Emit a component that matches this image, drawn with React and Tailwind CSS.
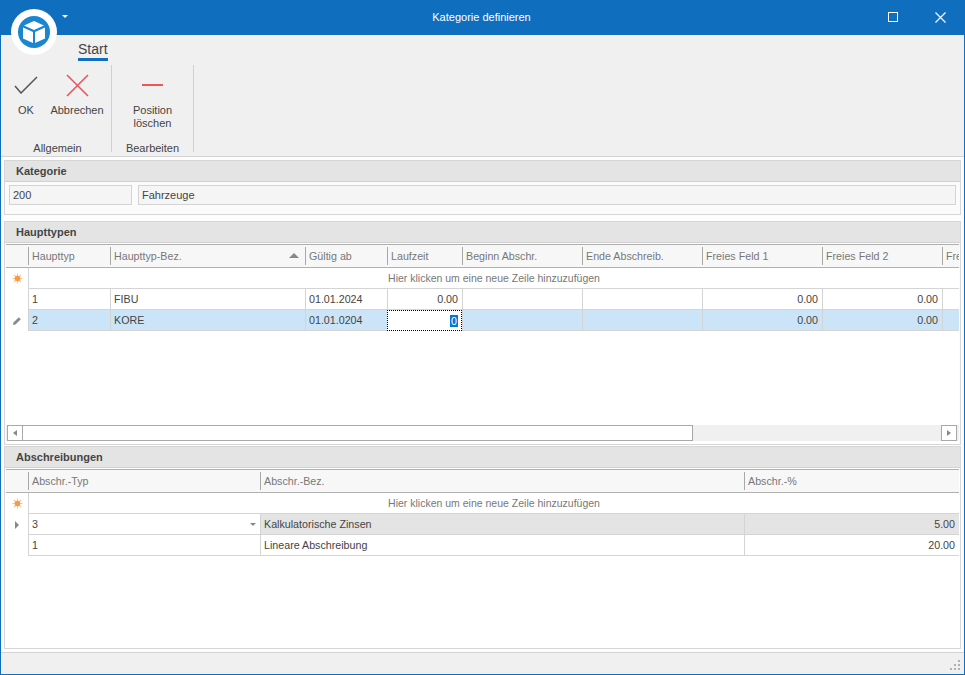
const FONT = "font-['Liberation_Sans',Arial,sans-serif]";

const MAIN_COLS = 'grid-cols-[22px_82px_195px_82px_75px_120px_120px_120px_120px_17px]';
const SUB_COLS = 'grid-cols-[22px_232px_484px_215px]';

const Cube = () => (
  <svg width="32" height="32" viewBox="0 0 32 32">
    <circle cx="16" cy="16" r="16" fill="#1a86d0" />
    <path d="M16 5 L26 9.5 L16 14 L6 9.5 Z" fill="#fff" />
    <path d="M5 11.5 L15 16 V27 L5 22.5 Z" fill="#fff" />
    <path d="M27 11.5 L17 16 V27 L27 22.5 Z" fill="#fff" />
  </svg>
);

const RibbonButton = ({ icon, label, className }) => (
  <div className={`flex flex-col items-center ${className}`}>
    <div className="h-[36px] flex items-center justify-center mt-[2px]">{icon}</div>
    <div className="text-[11px] leading-[13px] text-[#444] text-center mt-px">{label}</div>
  </div>
);

const PanelHeader = ({ title }) => (
  <div className="h-[21px] bg-[#e4e4e4] border-b border-[#d2d2d2] pl-[11px] flex items-center text-[11px] font-bold text-[#444]">
    {title}
  </div>
);

const HeadCell = ({ children, sort }) => (
  <div className="relative flex items-center pl-[4px] text-[10.7px] text-[#777] overflow-hidden whitespace-nowrap">
    <span className="absolute left-0 top-[2px] bottom-[2px] w-px bg-[#a8a8a8]" />
    {children}
    {sort && <span className="absolute right-[6px] top-[8px] w-0 h-0 border-x-[5px] border-x-transparent border-b-[5px] border-b-[#888]" />}
  </div>
);

const Cell = ({ children, right, className = '' }) => (
  <div className={`h-[21px] border-l border-b border-[#d4d4d4] flex items-center text-[10.7px] text-[#444] whitespace-nowrap overflow-hidden ${right ? 'justify-end pr-[4px]' : 'pl-[3px]'} ${className}`}>
    {children}
  </div>
);

const Star = () => (
  <svg width="11" height="11" viewBox="0 0 11 11">
    <g stroke="#f9c38d" strokeWidth="1.1">
      <path d="M5.5 0.5V10.5M0.5 5.5H10.5M2 2L9 9M9 2L2 9" />
    </g>
    <circle cx="5.5" cy="5.5" r="2.8" fill="#f79a45" />
  </svg>
);

const Pencil = () => (
  <svg width="10" height="10" viewBox="0 0 10 10">
    <path d="M1 9 L1.5 6.5 L6.8 1.2 L8.8 3.2 L3.5 8.5 Z" fill="#8a8a8a" />
  </svg>
);

const NewRow = ({ cols }) => (
  <div className={`grid ${cols}`}>
    <div className="h-[21px] border-b border-transparent flex items-center justify-center"><Star /></div>
    <div className="col-span-full col-start-2 h-[21px] pt-[2px] bg-white border-b border-l border-[#d4d4d4] flex items-center justify-center text-[10.5px] text-[#777]">
      Hier klicken um eine neue Zeile hinzuzufügen
    </div>
  </div>
);

const Haupttypen = () => (
  <div className="h-[224px] border border-[#d6d6d6] bg-[#fbfbfb] flex flex-col">
    <PanelHeader title="Haupttypen" />
    <div className="mx-px flex-1 flex flex-col bg-white border-t border-[#b0b0b0] mt-px overflow-hidden">
      <div className={`grid ${MAIN_COLS} h-[23px] bg-[#f7f7f7] border-b border-[#b0b0b0]`}>
        <div />
        <HeadCell>Haupttyp</HeadCell>
        <HeadCell sort>Haupttyp-Bez.</HeadCell>
        <HeadCell>Gültig ab</HeadCell>
        <HeadCell>Laufzeit</HeadCell>
        <HeadCell>Beginn Abschr.</HeadCell>
        <HeadCell>Ende Abschreib.</HeadCell>
        <HeadCell>Freies Feld 1</HeadCell>
        <HeadCell>Freies Feld 2</HeadCell>
        <HeadCell>Fre</HeadCell>
      </div>
      <NewRow cols={MAIN_COLS} />
      <div className={`grid ${MAIN_COLS}`}>
        <div className="h-[21px]" />
        <Cell>1</Cell>
        <Cell>FIBU</Cell>
        <Cell>01.01.2024</Cell>
        <Cell right>0.00</Cell>
        <Cell />
        <Cell />
        <Cell right>0.00</Cell>
        <Cell right>0.00</Cell>
        <Cell />
      </div>
      <div className={`grid ${MAIN_COLS}`}>
        <div className="h-[21px] flex items-center justify-center"><Pencil /></div>
        <Cell className="bg-[#cce4f7]">2</Cell>
        <Cell className="bg-[#cce4f7]">KORE</Cell>
        <Cell className="bg-[#cce4f7]">01.01.0204</Cell>
        <div className="h-[21px] bg-white border border-dotted border-black flex items-center justify-end pr-[3px]">
          <span className="bg-[#0078d7] text-white text-[10.7px] leading-[12px] px-px">0</span>
        </div>
        <Cell className="bg-[#cce4f7]" />
        <Cell className="bg-[#cce4f7]" />
        <Cell right className="bg-[#cce4f7]">0.00</Cell>
        <Cell right className="bg-[#cce4f7]">0.00</Cell>
        <Cell className="bg-[#cce4f7]" />
      </div>
      <div className="flex-1" />
      <div className="h-[16px] mb-[3px] flex items-stretch bg-[#f0f0f0] pl-px pr-[2px]">
        <div className="w-[16px] bg-white border border-[#a8a8a8] flex items-center justify-center">
          <span className="w-0 h-0 border-y-[3px] border-y-transparent border-r-[4px] border-r-[#888]" />
        </div>
        <div className="w-[670px] bg-white border border-l-0 border-[#a8a8a8]" />
        <div className="flex-1" />
        <div className="w-[16px] bg-white border border-[#a8a8a8] flex items-center justify-center">
          <span className="w-0 h-0 border-y-[3px] border-y-transparent border-l-[4px] border-l-[#888]" />
        </div>
      </div>
    </div>
  </div>
);

const Abschreibungen = () => (
  <div className="h-[203px] border border-[#d6d6d6] bg-white flex flex-col">
    <PanelHeader title="Abschreibungen" />
    <div className="mx-px flex-1 flex flex-col bg-white border-t border-[#b0b0b0] mt-px overflow-hidden">
      <div className={`grid ${SUB_COLS} h-[23px] bg-[#f7f7f7] border-b border-[#b0b0b0]`}>
        <div />
        <HeadCell>Abschr.-Typ</HeadCell>
        <HeadCell>Abschr.-Bez.</HeadCell>
        <HeadCell>Abschr.-%</HeadCell>
      </div>
      <NewRow cols={SUB_COLS} />
      <div className={`grid ${SUB_COLS}`}>
        <div className="h-[21px] flex items-center justify-center">
          <span className="w-0 h-0 border-y-[4px] border-y-transparent border-l-[4px] border-l-[#888]" />
        </div>
        <Cell className="relative">
          3
          <span className="absolute right-[4px] top-[9px] w-0 h-0 border-x-[3px] border-x-transparent border-t-[3px] border-t-[#888]" />
        </Cell>
        <Cell className="bg-[#e4e4e4]">Kalkulatorische Zinsen</Cell>
        <Cell right className="bg-[#e4e4e4]">5.00</Cell>
      </div>
      <div className={`grid ${SUB_COLS}`}>
        <div className="h-[21px]" />
        <Cell>1</Cell>
        <Cell>Lineare Abschreibung</Cell>
        <Cell right>20.00</Cell>
      </div>
    </div>
  </div>
);

export default function App() {
  return (
    <div className={`relative w-[965px] h-[675px] flex flex-col bg-white border-x border-b border-[#106ebe] overflow-hidden ${FONT}`}>
      {/* title bar */}
      <div className="h-[35px] -mx-px bg-[#106ebe] flex items-center relative shrink-0">
        <span className="absolute left-[62px] top-[15px] w-0 h-0 border-x-[3px] border-x-transparent border-t-[3px] border-t-white" />
        <div className="flex-1 text-center text-white text-[11px] pr-[2px]">Kategorie definieren</div>
        <div className="absolute right-[67px] top-[12px] w-[10px] h-[10px] border border-white" />
        <svg className="absolute right-[19px] top-[12px]" width="11" height="11" viewBox="0 0 11 11">
          <path d="M0.5 0.5L10.5 10.5M10.5 0.5L0.5 10.5" stroke="#fff" strokeWidth="1.2" />
        </svg>
      </div>

      {/* logo lies over the title bar */}
      <div className="absolute left-[10px] top-[9px] w-[46px] h-[46px] rounded-full bg-white flex items-center justify-center">
        <Cube />
      </div>

      {/* ribbon */}
      <div className="h-[122px] shrink-0 bg-[#f0f0f0] border-b border-[#d4d4d4]">
        <div className="h-[30px] pl-[77px] pt-[5px] flex items-start">
          <div className="text-[14px] leading-[18px] text-[#444] border-b-[3px] border-[#106ebe]">Start</div>
        </div>
        <div className="flex h-[87px] pl-[3px]">
          <div className="w-[108px] border-r border-[#d0d0d0] flex flex-col">
            <div className="flex flex-1">
              <RibbonButton
                className="w-[44px]"
                label="OK"
                icon={
                  <svg width="24" height="18" viewBox="0 0 24 18">
                    <path d="M1 10 L7 17 L23 1" fill="none" stroke="#555" strokeWidth="1.5" />
                  </svg>
                }
              />
              <RibbonButton
                className="w-[58px]"
                label="Abbrechen"
                icon={
                  <svg width="23" height="23" viewBox="0 0 23 23">
                    <path d="M1 1L22 22M22 1L1 22" fill="none" stroke="#f0525a" strokeWidth="1.6" />
                  </svg>
                }
              />
            </div>
            <div className="h-[11px] mb-px text-center text-[11px] text-[#444] leading-[17px]">Allgemein</div>
          </div>
          <div className="w-[82px] border-r border-[#d0d0d0] flex flex-col">
            <div className="flex flex-1 justify-center">
              <RibbonButton
                className="w-[60px]"
                label={<>Position<br />löschen</>}
                icon={<div className="w-[21px] h-[2px] bg-[#ee5555]" />}
              />
            </div>
            <div className="h-[11px] mb-px text-center text-[11px] text-[#444] leading-[17px]">Bearbeiten</div>
          </div>
        </div>
      </div>

      {/* content */}
      <div className="flex-1 flex flex-col px-[3px] pt-[3px] bg-[#fdfdfd]">
        <div className="h-[55px] border border-[#d6d6d6] bg-[#fbfbfb]">
          <PanelHeader title="Kategorie" />
          <div className="flex gap-[6px] pl-[4px] pr-[4px] pt-[3px]">
            <div className="w-[123px] h-[20px] border border-[#d4d4d4] bg-[#f5f5f5] flex items-center pl-[3px] text-[11px] text-[#444]">200</div>
            <div className="flex-1 h-[20px] border border-[#d4d4d4] bg-[#f5f5f5] flex items-center pl-[3px] text-[11px] text-[#444]">Fahrzeuge</div>
          </div>
        </div>
        <div className="h-[6px]" />
        <Haupttypen />
        <div className="h-px" />
        <Abschreibungen />
      </div>

      {/* status bar */}
      <div className="h-[22px] shrink-0 bg-[#f0f0f0] border-t border-[#d4d4d4] flex justify-end items-end pr-[4px] pb-[4px]">
        <div className="grid grid-cols-3 gap-[2px]">
          <span /><span /><span className="w-[2px] h-[2px] bg-[#b0b0b0]" />
          <span /><span className="w-[2px] h-[2px] bg-[#b0b0b0]" /><span className="w-[2px] h-[2px] bg-[#b0b0b0]" />
          <span className="w-[2px] h-[2px] bg-[#b0b0b0]" /><span className="w-[2px] h-[2px] bg-[#b0b0b0]" /><span className="w-[2px] h-[2px] bg-[#b0b0b0]" />
        </div>
      </div>
    </div>
  );
}
